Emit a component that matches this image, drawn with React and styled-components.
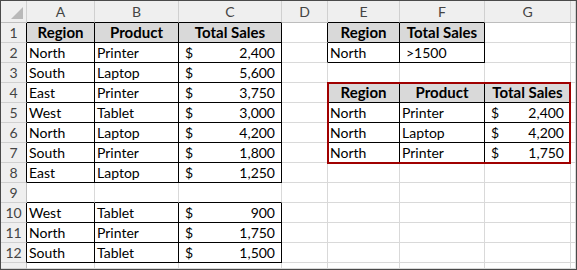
import React from "react";
import styled, { createGlobalStyle } from "styled-components";

const GlobalStyle = createGlobalStyle`
  body {
    margin: 0;
    background: #ffffff;
    font-family: "Lato", "Liberation Sans", sans-serif;
  }
`;

const colWidths = [26, 68, 84, 103, 46, 72, 85, 86, 5];
const colNames = ["", "A", "B", "C", "D", "E", "F", "G", ""];

const GRID = "#d9d9d9";
const INK = "#000000";

const Sheet = styled.div`
  display: grid;
  grid-template-columns: ${colWidths.map((w) => `${w}px`).join(" ")};
  grid-template-rows: 22px repeat(12, 20px) 6px;
  width: max-content;
  border: 1px solid #4a4a4a;
  background: #ffffff;
`;

const Slot = styled.div`
  box-sizing: border-box;
  grid-row: ${(p) => p.$row + 1};
  grid-column: ${(p) => p.$col + 1};
`;

const ColHead = styled(Slot)`
  display: flex;
  align-items: center;
  justify-content: center;
  background: #efefef;
  border-right: 1px solid #d0d0d0;
  border-bottom: 1px solid ${(p) => (p.$bb ? INK : "#bdbdbd")};
  color: #444444;
  font-size: 14px;
  position: relative;
`;

const Corner = styled.span`
  position: absolute;
  right: 3px;
  bottom: 3px;
  width: 0;
  height: 0;
  border-left: 12px solid transparent;
  border-bottom: 12px solid #b9b9b9;
`;

const RowHead = styled(Slot)`
  display: flex;
  align-items: flex-end;
  justify-content: center;
  padding-bottom: 1px;
  background: #efefef;
  border-right: 1px solid ${(p) => (p.$rb ? INK : "#bdbdbd")};
  border-bottom: 1px solid #d0d0d0;
  color: #444444;
  font-size: 14px;
  line-height: 17px;
`;

const Cell = styled(Slot)`
  display: flex;
  align-items: flex-end;
  justify-content: ${(p) => (p.$head ? "center" : "flex-start")};
  padding: 0 2px 1px 2px;
  background: ${(p) => (p.$head ? "#d9d9d9" : "#ffffff")};
  border-right: 1px solid ${(p) => (p.$rb ? INK : GRID)};
  border-bottom: 1px solid ${(p) => (p.$bb ? INK : GRID)};
  color: #000000;
  font-size: ${(p) => (p.$head ? "15px" : "14px")};
  font-weight: ${(p) => (p.$head ? 700 : 400)};
  line-height: 17px;
  white-space: nowrap;
  overflow: hidden;
`;

const Money = styled.span`
  display: flex;
  justify-content: space-between;
  width: 100%;
  padding: 0 4px 0 4px;
`;

const Indent = styled.span`
  padding-left: 4px;
`;

const Highlight = styled.div`
  grid-column: 6 / 9;
  grid-row: 5 / 9;
  margin: -1px 0 -1px -1px;
  border: 2px solid #a00000;
  pointer-events: none;
`;

// A..H are columns 1..8, rows 1..13
const tables = [
  { r0: 1, r1: 8, c0: 1, c1: 3 },
  { r0: 10, r1: 12, c0: 1, c1: 3 },
  { r0: 1, r1: 2, c0: 5, c1: 6 },
  { r0: 4, r1: 7, c0: 5, c1: 7 },
];

const inTable = (r, c) =>
  tables.some((t) => r >= t.r0 && r <= t.r1 && c >= t.c0 && c <= t.c1);

const heads = {
  "1-1": "Region",
  "1-2": "Product",
  "1-3": "Total Sales",
  "1-5": "Region",
  "1-6": "Total Sales",
  "4-5": "Region",
  "4-6": "Product",
  "4-7": "Total Sales",
};

const sales = [
  ["North", "Printer", "2,400"],
  ["South", "Laptop", "5,600"],
  ["East", "Printer", "3,750"],
  ["West", "Tablet", "3,000"],
  ["North", "Laptop", "4,200"],
  ["South", "Printer", "1,800"],
  ["East", "Laptop", "1,250"],
  null,
  ["West", "Tablet", "900"],
  ["North", "Printer", "1,750"],
  ["South", "Tablet", "1,500"],
];

const results = [
  ["North", "Printer", "2,400"],
  ["North", "Laptop", "4,200"],
  ["North", "Printer", "1,750"],
];

function valueAt(r, c) {
  const row = r >= 2 && r <= 12 ? sales[r - 2] : null;
  if (row && c >= 1 && c <= 3) return { text: row[c - 1], money: c === 3 };
  if (r >= 5 && r <= 7 && c >= 5 && c <= 7) {
    const res = results[r - 5];
    return { text: res[c - 5], money: c === 7 };
  }
  if (r === 2 && c === 5) return { text: "North" };
  if (r === 2 && c === 6) return { text: ">1500", indent: true };
  return null;
}

function renderCell(r, c) {
  const rb = inTable(r, c) || inTable(r, c + 1);
  const bb = inTable(r, c) || inTable(r + 1, c);
  const head = heads[`${r}-${c}`];
  if (head) {
    return (
      <Cell key={`${r}-${c}`} $row={r} $col={c} $head $rb={rb} $bb={bb}>
        {head}
      </Cell>
    );
  }
  const v = valueAt(r, c);
  let content = null;
  if (v && v.money) {
    content = (
      <Money>
        <span>$</span>
        <span>{v.text}</span>
      </Money>
    );
  } else if (v && v.indent) {
    content = <Indent>{v.text}</Indent>;
  } else if (v) {
    content = v.text;
  }
  return (
    <Cell key={`${r}-${c}`} $row={r} $col={c} $rb={rb} $bb={bb}>
      {content}
    </Cell>
  );
}

export default function App() {
  const rows = [];
  for (let r = 1; r <= 13; r++) {
    rows.push(
      <RowHead key={`h${r}`} $row={r} $col={0} $rb={inTable(r, 1)}>
        {r <= 12 ? r : ""}
      </RowHead>
    );
    for (let c = 1; c <= 8; c++) rows.push(renderCell(r, c));
  }

  return (
    <>
      <GlobalStyle />
      <Sheet>
        {colNames.map((name, c) => (
          <ColHead key={`c${c}`} $row={0} $col={c} $bb={inTable(1, c)}>
            {c === 0 ? <Corner /> : name}
          </ColHead>
        ))}
        {rows}
        <Highlight />
      </Sheet>
    </>
  );
}
